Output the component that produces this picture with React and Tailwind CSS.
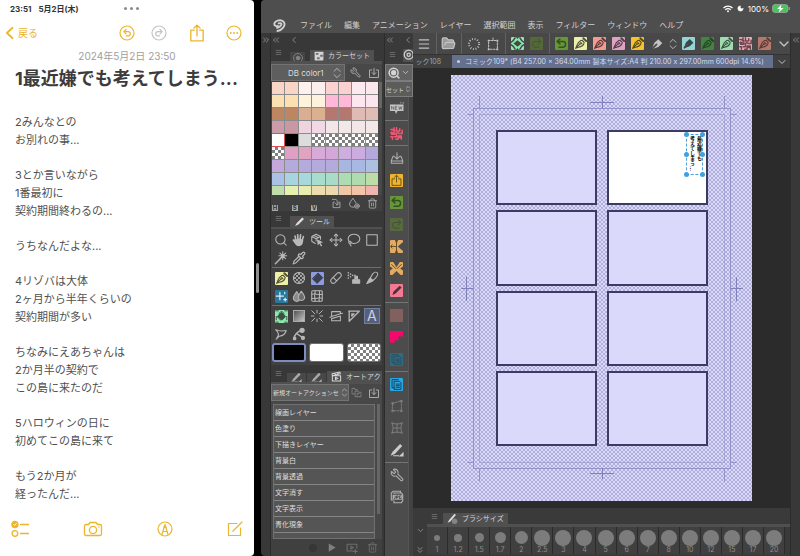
import React from "react";
import {
  Search, Move, Lasso, Wrench, Trash2, Pipette, FolderOpen,
  ChevronDown, ChevronLeft, ChevronsLeft, ChevronsRight, ChevronsDown, ChevronsUpDown, Menu, Moon,
} from "lucide-react";

const CHECKER = "bg-[repeating-conic-gradient(#808080_0_25%,#ffffff_0_50%)] bg-[length:6px_6px]";

function Svg({ size = "size-[14px]", children, width = 1.2 }) {
  return (
    <svg viewBox="0 0 16 16" className={`${size} shrink-0`} fill="none" stroke="currentColor" strokeWidth={width} strokeLinecap="round" strokeLinejoin="round" aria-hidden="true">
      {children}
    </svg>
  );
}

/* ---------- glyphs, 16 x 16 grid ---------- */

const G = {
  nib: (
    <>
      <path d="M2 14 C4 11 3.5 6.5 8 4.5 L10 4 L12.5 6.5 L12 8.5 C10 13 5 12 2 14Z M2.5 13.5 L7.5 8.5" strokeWidth="1.4" />
      <circle cx="8.4" cy="7.8" r="1.1" />
      <path d="M11.5 1.5 L15 5" strokeWidth="2.4" />
    </>
  ),
  marker: (
    <>
      <path d="M2 14 L5 6.5 L9.5 2.5 L14 7 L9.5 11.5Z" fill="currentColor" stroke="none" />
      <path d="M3 13 L7.5 8.5" stroke="#4a4a4a" strokeWidth="2" />
    </>
  ),
  bucket: (
    <>
      <path d="M3 8 L8 3 L13 8 L9 12 H7Z" fill="currentColor" />
      <path d="M1 1 H4 M12 1 H15 M1 15 H4 M12 15 H15 M1.5 8 V12 M14.5 8 V12 M5 5 C5 1 11 1 11 5" />
    </>
  ),
  rotateView: (
    <>
      <path d="M8 4 L13 8 L8 12 L3 8Z" fill="#484848" stroke="none" />
      <path d="M0 6.5 C2 5.5 4 3 5 1 M16 6.5 C14 5.5 12 3 11 1 M0 9.5 C2 10.5 4 13 5 15 M16 9.5 C14 10.5 12 13 11 15" strokeWidth="1.8" stroke="#484848" />
      <path d="M6 0 H10 L8 2.5Z M6 16 H10 L8 13.5Z" fill="#484848" stroke="none" />
    </>
  ),
  undoTile: <path d="M6 2.5 L2.5 5.5 L6 8.5 M3 5.5 H10 C14 5.5 14 12.5 10 12.5 H5" strokeWidth="1.8" />,
  redoTile: <path d="M10 2.5 L13.5 5.5 L10 8.5 M13 5.5 H6 C2 5.5 2 12.5 6 12.5 H11" />,
  maze: <path d="M1 3 H5 V1 M8 1 V5 H12 V2 M15 4 V8 H11 M2 6 V9 H6 V6 M8 8 V12 H5 M1 12 H3 V15 M7 15 H10 V11 H14 V15 M4 4.5 H6 M13 13 H11 M9 7 H10 M1 7 H4" strokeWidth="1.8" />,
  share: <path d="M5.5 6 H2.5 V14 H13.5 V6 H10.5 M8 10 V2 M5.5 4 L8 1.5 L10.5 4" />,
  tray: <path d="M5 6 H3.5 L1.5 11 V14 H14.5 V11 L12.5 6 H11 M1.5 11.5 H14.5 M8 2 V9 M5.5 6.8 L8 9.2 L10.5 6.8" />,
  flipH: (
    <>
      <path d="M9.5 8 L16 2.5 V13.5Z M6 0 H10 L8 5Z M6 16 H10 L8 11Z" fill="#4c4c4c" stroke="none" />
      <path d="M1 8 H7 M2.5 6 L1 8 L2.5 10 M8 1 V15" stroke="#6a4a20" />
    </>
  ),
  flipV: (
    <>
      <path d="M4 0 H12 L8 6.5Z M3 16 L8 11 L13 16Z M0 5.5 L3.5 8 L0 10.5Z M16 5.5 L12.5 8 L16 10.5Z" fill="#4c4c4c" stroke="none" />
      <path d="M2 3 L7 8 M14 3 L9 8" stroke="#6a4a20" />
    </>
  ),
  slash: <path d="M3 13.5 L4.2 9.5 L12 2 L14.3 4.3 L6.5 12Z" fill="currentColor" stroke="none" />,
  blob: <path d="M0 0 H16 V7 L11 6 L10 12 L6 11 L5 15 L0 14Z" fill="#f4086c" stroke="none" />,
  sheet: (
    <>
      <path d="M5.5 4 H11.5 L13.5 6 V14 H5.5Z" />
      <path d="M5 12 H2.5 V2 H10 M7.5 7.5 H11.5 M7.5 9.5 H11.5 M7.5 11.5 H11.5" />
    </>
  ),
  distort: (
    <>
      <path d="M3 5 L13 2 V13.5 H2.5Z" strokeDasharray="2 1.5" />
      <circle cx="3" cy="5" r="1" /><circle cx="13" cy="2.5" r="1" /><circle cx="13" cy="13.5" r="1" /><circle cx="3" cy="13.5" r="1" />
    </>
  ),
  mesh: <path d="M2 2 C4 6 4 10 2 14 M14 2 C12 6 12 10 14 14 M2 2 C6 4 10 4 14 2 M2 14 C6 12 10 12 14 14 M8 3 V13 M3.5 8 H12.5" />,
  bigPencil: (
    <>
      <path d="M0.5 14.5 L3 10 L11.5 1 L14 3.5 L5.5 12.5Z" fill="currentColor" stroke="none" />
      <path d="M4 14.5 H10" />
      <path d="M15.5 10 V15.5 H10Z" fill="currentColor" stroke="none" />
    </>
  ),
  hand: (
    <path d="M4.5 8.5 L3.5 3.5 M6.8 7.5 L6.5 2 M9.2 7.5 L9.8 2 M11.5 8.5 L13 4 M4.5 8.5 L1.5 8 L5 13 C6 14.5 10 14.5 11 12.5 L12 8.5 L9 7.5 H7Z" fill="currentColor" strokeWidth="1.9" />
  ),
  cube: (
    <>
      <path d="M7 1.5 L12 4 V7 M7 1.5 L2 4 V9.5 L6 12 M2 4 L7 6.5 L12 4 M7 6.5 V9 M4.5 2.8 L9.5 5.3" />
      <path d="M8 7 L15 10.5 L12 11.3 L14 14.5 L12.6 15.3 L10.8 12.2 L8.8 14Z" fill="currentColor" stroke="none" />
    </>
  ),
  box: <rect x="2" y="2" width="12" height="12" />,
  wand: (
    <>
      <path d="M8 8 L1.5 14.5" strokeWidth="1.6" />
      <path d="M10 1 V10 M5.5 5.5 H14.5 M6.8 2.3 L13.2 8.7 M13.2 2.3 L6.8 8.7" />
      <circle cx="10" cy="5.5" r="2.2" fill="currentColor" stroke="none" />
    </>
  ),
  halftone: (
    <>
      <circle cx="8" cy="8" r="6.3" strokeDasharray="2.5 1" />
      <path d="M3.5 3.5 L12.5 12.5 M12.5 3.5 L3.5 12.5 M6.5 2 L14 9.5 M2 6.5 L9.5 14 M9.5 2 L2 9.5 M14 6.5 L6.5 14" strokeWidth="1" />
    </>
  ),
  eraser: <path d="M9 1.5 L14.5 7 L7.5 14 L2 8.5Z" fill="currentColor" />,
  plaster: <path d="M2.5 9.5 L9.5 2.5 C12 0.5 15.5 4 13.5 6.5 L6.5 13.5 C4 15.5 0.5 12 2.5 9.5Z M5 7.5 L8.5 11" />,
  spray: (
    <>
      <path d="M6.5 10 H14.5 V14 H6.5Z M9 9 V6 H12 V9" fill="currentColor" />
      <path d="M1.5 2 V2.1 M1.5 5 V5.1 M1.5 8 V8.1 M4 3.5 V3.6 M4 6.5 V6.6 M6.5 5 V5.1 M9 5 V5.1" strokeWidth="1.8" />
    </>
  ),
  brush: (
    <>
      <path d="M9 3 C11 1 13 1 14 2 C15 4 14 6 12.5 7.5 L9 11 L6 8Z" />
      <path d="M6 8 L9 11 C7 13 5 12.5 2 14.5 C3.5 12 4 9.5 6 8Z" fill="currentColor" />
    </>
  ),
  sparkle: <path d="M6 3 V12 M1.5 7.5 H10.5 M12.5 10 V13.5 M10.8 11.8 H14.2 M12 3 V4.5" stroke="#d8eef8" strokeWidth="1.5" />,
  blend: (
    <>
      <path d="M5.5 3 C3 6 1.5 8.5 1.5 10.5 A4 4 0 0 0 9 12 C9.5 9 7 5.5 5.5 3Z" fill="#8a8a8a" />
      <path d="M10.5 2.5 C8 6 7 8 7 10.5 A4 4 0 0 0 14.5 10.5 C14.5 8 12.5 5 10.5 2.5Z" fill="#6c6c6c" />
    </>
  ),
  grid: (
    <>
      <rect x="2" y="2" width="12" height="12" rx="1" />
      <path d="M6 2 C5 6 5 10 6 14 M10.5 2 C12 6 10 10 10.5 14 M2 6 C6 5 10 7 14 6 M2 10.5 C6 11.5 10 9.5 14 10.5" />
    </>
  ),
  burst: <path d="M8 1.5 V4.5 M8 11.5 V14.5 M1.5 8 H4.5 M11.5 8 H14.5 M2 2 L5.5 5.5 M14 2 L10.5 5.5 M2 14 L5.5 10.5 M14 14 L10.5 10.5" strokeWidth="1.1" />,
  frame: <path d="M3 3 H13 V5.5 L3 8.5Z M3 11 L13 8 V13.5 H3Z M1 9.5 L3 8.8 M13 5.5 L15.5 4.8" />,
  ruler: <path d="M2 2.5 H14 L2.5 14 V2.5 M5.5 5.5 H8 L5.5 8Z" />,
  balloon: <path d="M2 3 C6 5 9 5 14 4 C13 8 10 10 6 10.5 L2.5 14 L5 9.5 C5.5 7 4 5 2 3Z" />,
  node: (
    <>
      <path d="M2 14 C3 8 7 5 11 4 M6 8 L12 12" strokeWidth="1.5" />
      <circle cx="11.5" cy="3.8" r="2.4" fill="currentColor" /><circle cx="3" cy="13" r="1.5" fill="currentColor" /><circle cx="12.5" cy="12.5" r="1.8" fill="currentColor" />
    </>
  ),
  download: <path d="M5 4 H2 V14 H14 V4 H11 M8 2 V10 M5.5 7.5 L8 10 L10.5 7.5" />,
  stamp: <path d="M5 6 H3 V14 H13 V6 H11 M2 2 H6 C8 2 9 3 9 5 V10 M6.5 8 L9 10.5 L11.5 8" />,
  dropPlus: (
    <>
      <path d="M6.5 2 C4 5 2 7.5 2 10 A4.5 4.5 0 0 0 9 13 M6.5 2 C8 4 9.5 5.5 10.5 7.5" />
      <circle cx="12" cy="12" r="3" /><path d="M12 10.8 V13.2 M10.8 12 H13.2" />
    </>
  ),
  swatches: (
    <>
      <rect x="1" y="1" width="14" height="14" rx="1" fill="#d4d4d4" stroke="none" />
      <path d="M3 3 H7 V6 H3Z M10 6 H14 V9 H10Z M5 10 H9 V13 H5Z" fill="#6c6c6c" stroke="none" />
    </>
  ),
  clapper: <path d="M2 7 H14 V14.5 H2Z M2 7 L1.5 4 L13 1.5 L13.5 4 L2 7 M5 3.5 L7 5.5 M9 2.5 L11 4.5 M6.5 9 V12.5 L10 10.7Z" strokeWidth="1.5" />,
  folders: <path d="M1.5 2 H5 L6 3.5 H9 V6 M1.5 2 V10 H6 M6 6 H10 L11 7.5 H14.5 V14 H6Z M9 12 V9.5 H12" strokeWidth="1.5" />,
  setPlus: <path d="M9 12 H1.5 V3 H14.5 V8 M6.5 5.5 V9.5 L10 7.5Z M12.5 10 V15 M10 12.5 H15" strokeWidth="1.5" />,
  dottedCircle: <circle cx="8" cy="8" r="5.8" strokeDasharray="1 2.04" strokeWidth="2.4" strokeLinecap="butt" />,
  crop: (
    <>
      <rect x="3" y="4" width="10" height="10" strokeDasharray="1.8 1.5" />
      <path d="M2 3 H4 V5 H2Z M12 3 H14 V5 H12Z M2 13 H4 V15 H2Z M12 13 H14 V15 H12Z M7.5 0.5 H8.5 V4 H7.5Z" fill="currentColor" stroke="none" />
    </>
  ),
};

const TILE = "flex size-[13px] items-center justify-center overflow-hidden rounded-[1px]";

function Tile({ cls, glyph }) {
  return (
    <span className={`${TILE} ${cls}`}>
      <Svg size="size-[13px]">{G[glyph]}</Svg>
    </span>
  );
}

/* ---------- notes ---------- */

const NOTES = [
  ["2みんなとの", "お別れの事..."],
  ["3とか言いながら", "1番最初に", "契約期間終わるの..."],
  ["うちなんだよな..."],
  ["4リゾバは大体", "2ヶ月から半年くらいの", "契約期間が多い"],
  ["ちなみにえあちゃんは", "2か月半の契約で", "この島に来たのだ"],
  ["5ハロウィンの日に", "初めてこの島に来て"],
  ["もう2か月が", "経ったんだ..."],
];

function NotesApp() {
  return (
    <section className="flex w-[31.75%] shrink-0 flex-col overflow-hidden rounded-r-[4px] bg-white text-[#505050]">
      <div className="grid h-[17px] grid-cols-3 items-center pl-[10px] text-[8px] font-bold text-[#333]">
        <span className="flex gap-[7px] whitespace-nowrap"><span>23:51</span><span>5月2日(木)</span></span>
        <button aria-label="マルチタスク" className="mx-auto flex gap-[3px]">
          <i className="size-[3px] rounded-full bg-[#8a8a8a]" /><i className="size-[3px] rounded-full bg-[#8a8a8a]" /><i className="size-[3px] rounded-full bg-[#8a8a8a]" />
        </button>
      </div>
      <div className="flex h-8 items-center pr-[12px] pl-[5px] text-[#ecb52c]">
        <button className="flex items-center gap-[4px] text-[10px] leading-[14px]">
          <svg viewBox="0 0 10 16" className="h-[14px] w-[9px]" fill="none" stroke="currentColor" strokeWidth="2" strokeLinecap="round" strokeLinejoin="round" aria-hidden="true"><path d="M8.5 2 L2 8 L8.5 14" /></svg>
          戻る
        </button>
        <div className="ml-auto flex items-center gap-[16px]">
          <button aria-label="取り消す"><Svg size="size-[16px]"><circle cx="8" cy="8" r="7" /><path d="M7 4.5 L4.8 6.7 L7 8.9 M5 6.7 H9.2 C12 6.7 12 10.9 9.2 10.9 H7.5" /></Svg></button>
          <button aria-label="やり直す" className="text-[#c4c4c4]"><Svg size="size-[16px]"><circle cx="8" cy="8" r="7" /><path d="M9 4.5 L11.2 6.7 L9 8.9 M11 6.7 H6.8 C4 6.7 4 10.9 6.8 10.9 H8.5" /></Svg></button>
          <button aria-label="共有" className="ml-[5px]"><Svg size="size-[18px]"><path d="M5.5 5.5 H2.5 V15 H13.5 V5.5 H10.5 M8 10.5 V1 M5.3 3.5 L8 1 L10.7 3.5" /></Svg></button>
          <button aria-label="その他" className="ml-[4px]"><Svg size="size-[16px]"><circle cx="8" cy="8" r="7" /><path d="M4.8 8 V8.01 M8 8 V8.01 M11.2 8 V8.01" strokeWidth="1.9" /></Svg></button>
        </div>
      </div>
      <div className="h-[14px] text-center text-[10px] leading-[14px] text-[#a0a0a0]">2024年5月2日 23:50</div>
      <h1 className="mt-[3px] px-[15px] text-[18px] leading-[26px] font-bold whitespace-nowrap text-[#3c3c3c]">1最近嫌でも考えてしまう...</h1>
      <div className="mt-[21px] flex min-h-0 flex-1 flex-col gap-[17px] overflow-hidden px-[15px] text-[11px] leading-[18px]">
        {NOTES.map((lines) => (
          <p key={lines[0]}>{lines.map((l) => <span key={l} className="block">{l}</span>)}</p>
        ))}
      </div>
      <div className="flex items-center justify-between px-[11px] pt-1 pb-[18px] text-[#ecb52c]">
        <button aria-label="チェックリスト"><Svg size="size-[18px]"><circle cx="3.5" cy="4" r="2.7" fill="currentColor" /><path d="M2.4 4 L3.2 4.9 L4.8 3" stroke="#fff" strokeWidth="0.8" /><circle cx="3.5" cy="12" r="2.5" /><path d="M8.5 4 H15.5 M8.5 12 H15.5" /></Svg></button>
        <button aria-label="カメラ"><svg viewBox="0 0 20 16" className="h-[16px] w-[20px]" fill="none" stroke="currentColor" strokeWidth="1.3" strokeLinejoin="round" aria-hidden="true"><path d="M3 3.5 H5.5 L7 1.5 H13 L14.5 3.5 H17 Q18.5 3.5 18.5 5 V13 Q18.5 14.5 17 14.5 H3 Q1.5 14.5 1.5 13 V5 Q1.5 3.5 3 3.5Z" /><circle cx="10" cy="9" r="3.6" /><path d="M15.5 6 H16.5" /></svg></button>
        <button aria-label="マークアップ"><Svg size="size-[16px]"><circle cx="8" cy="8" r="7" /><path d="M5 13.5 L7.2 6 H8.8 L11 13.5 M6 10.5 H10" /><path d="M7.1 6.5 L8 3.5 L8.9 6.5Z" fill="currentColor" /></Svg></button>
        <button aria-label="新規メモ"><Svg size="size-[16px]"><path d="M10 2.5 H1.5 V14.5 H13.5 V7 M6.5 9.5 L15 1 M6.2 9.9 L5.8 10.3" /></Svg></button>
      </div>
    </section>
  );
}

/* ---------- paint app ---------- */

const MENUS = ["ファイル", "編集", "アニメーション", "レイヤー", "選択範囲", "表示", "フィルター", "ウィンドウ", "ヘルプ"];

function TopBar() {
  return (
    <header className="bg-[#4e4e4e] text-[#d0d0d0]">
      <div className="flex h-[17px] items-center justify-end gap-[3px] pr-[10px] text-[8px] text-white">
        <svg viewBox="0 0 20 16" className="h-[8px] w-[10px]" fill="none" stroke="currentColor" strokeWidth="2.6" aria-hidden="true"><path d="M1 6 C6 1 14 1 19 6 M4.5 9.5 C8 6.5 12 6.5 15.5 9.5" /><path d="M7.5 12 C9 10.8 11 10.8 12.5 12 L10 15Z" fill="currentColor" stroke="none" /></svg>
        <Moon className="mx-[1px] size-[7px] fill-current" />
        <span>100%</span>
        <svg viewBox="0 0 36 18" className="h-[9px] w-[18px]" aria-hidden="true"><rect x="1" y="1" width="31" height="16" rx="5" fill="#43c759" stroke="#a6a6a6" strokeWidth="1.5" /><path d="M34.5 6 V12" stroke="#a6a6a6" strokeWidth="2" /><path d="M19 1 L10 10 H15.5 L13.5 17 L23 8 H17.5Z" fill="#fff" /></svg>
      </div>
      <nav className="flex h-4 items-center gap-[12px] pl-[12px] text-[8px] whitespace-nowrap">
        <svg viewBox="0 0 16 16" className="mr-[2px] size-[13px]" fill="none" stroke="currentColor" strokeWidth="2.3" strokeLinecap="round" strokeLinejoin="round" aria-hidden="true"><path d="M6 8.5 C3 9.5 1 7.5 1.8 5 C3 2 8 1 11 2 C15 3.5 15 7.5 12.5 10.5 C10.5 13 7.5 14.5 5.5 14.8 M7 5.5 C9.5 4.5 11 5.5 10 7.5 C9 9.5 6.5 10.5 5 11" /></svg>
        {MENUS.map((m) => <button key={m}>{m}</button>)}
      </nav>
    </header>
  );
}

const PALETTE = [
  "bg-[#f9d5c5]", "bg-[#f9d5c5]", "bg-[#fdf0ee]", "bg-[#fdeeee]", "bg-[#fcd2d0]", "bg-[#fbd0cf]", "bg-[#fdeaf0]", "bg-[#fce8ec]",
  "bg-[#fbe0b0]", "bg-[#fbe0b2]", "bg-[#fdf2dc]", "bg-[#fdf2de]", "bg-[#ffb8d8]", "bg-[#ffb8d8]", "bg-[#fde6f0]", "bg-[#fce6ee]",
  "bg-[#bd8660]", "bg-[#bd8660]", "bg-[#d9ae92]", "bg-[#dbb090]", "bg-[#b57870]", "bg-[#b57870]", "bg-[#e0bab4]", "bg-[#e0bcb4]",
  "bg-[#cb9ba8]", "bg-[#c998a4]", "bg-[#efd4e0]", "bg-[#f2d8e4]", "bg-[#f2e6e8]", "bg-[#f2e8e8]", "bg-[#f2e6e8]", "bg-[#f2e8e6]",
  "bg-white", "bg-black", "bg-[#dcdcdc]", CHECKER, CHECKER, CHECKER, CHECKER, CHECKER,
  CHECKER, "bg-[#dea0c4]", "bg-[#e0a4c0]", "bg-[#d8aada]", "bg-[#d4a6da]", "bg-[#cdaede]", "bg-[#ccace0]", "bg-[#b4a8dc]",
  "bg-[#c4a8dc]", "bg-[#b4aadc]", "bg-[#b4aadc]", "bg-[#b4aadc]", "bg-[#b4aadc]", "bg-[#aab6e2]", "bg-[#a8b8e2]", "bg-[#acc0e2]",
  "bg-[#aac0e4]", "bg-[#a8d4e0]", "bg-[#a8d8dc]", "bg-[#a8dccc]", "bg-[#a8dcc8]", "bg-[#acdcb4]", "bg-[#aedcb0]", "bg-[#bcdca8]",
  "bg-[#c0dcaa]", "bg-[#e6f0ae]", "bg-[#e8ecae]", "bg-[#ecdcae]", "bg-[#eed8b0]", "bg-[#f0c8a8]", "bg-[#f2c4a8]", "bg-[#f0b4b0]",
];

function PanelTabs({ children }) {
  return (
    <div className="flex h-[14px] items-end pl-[1px]">
      <Menu className="mr-[8px] mb-[5px] ml-[3px] size-[7px] shrink-0 text-[#8a8a8a]" />
      {children}
    </div>
  );
}

const TAB = "flex h-[11px] items-center gap-[4px] bg-[#505050] px-[4px] text-[7px] leading-[11px] whitespace-nowrap text-[#d6d6d6]";

function PanelSelect({ label, value, wide }) {
  return (
    <div className={`relative flex h-[17px] items-center border border-[#737373] bg-[#5e5e5e] ${wide ? "w-[78px]" : "w-[74px]"}`}>
      <select aria-label={label} className={`h-full w-full appearance-none text-[#dcdcdc] outline-none ${wide ? "pl-[1px] text-[6px]" : "pl-[16px] text-[8px]"}`}>
        <option>{value}</option>
      </select>
      <ChevronsUpDown className={`pointer-events-none absolute text-[#c0c0c0] ${wide ? "-right-[2px] size-[11px]" : "right-0 size-[14px]"}`} strokeWidth={1.5} />
    </div>
  );
}

function ColorPanel() {
  return (
    <>
      <PanelTabs>
        <button aria-label="カラーサークル" className="flex h-[9px] w-[15px] items-start justify-center overflow-hidden bg-[#454545] text-[#858585]"><Svg size="size-[12px]"><circle cx="8" cy="8" r="6" /><circle cx="8" cy="8" r="2.5" fill="currentColor" /></Svg></button>
        <button className={`ml-[5px] ${TAB}`}><Svg size="size-[10px]">{G.swatches}</Svg>カラーセット</button>
      </PanelTabs>
      <div className="border-t-[3px] border-[#505050] bg-[#484848]">
        <div className="flex h-[17px] items-center text-[#b4b4b4]">
          <PanelSelect label="カラーセット" value="DB color1" />
          <button aria-label="設定" className="ml-[5px]"><Wrench className="size-[11px] -scale-x-100" /></button>
          <button aria-label="追加" className="ml-[7px]"><Svg size="size-[12px]">{G.download}</Svg></button>
        </div>
        <div className="flex h-[114px] gap-[1px] bg-[#484848] pt-[1px] pl-[1px]">
          <div className="grid flex-1 auto-rows-[12px] grid-cols-8 gap-px overflow-hidden bg-[#8c8c8c]">
            {PALETTE.map((c, i) => (
              <button key={i} aria-label={`色 ${i + 1}`} className={`${c} ${i === 32 ? "outline outline-[#dc5050]" : ""}`} />
            ))}
          </div>
          <div className="h-[26px] w-[3px] bg-[#666]" />
        </div>
        <div className="flex h-[16px] items-center justify-between bg-[#404040] pr-[4px] pl-[1px] text-[#b0b0b0]">
          {["H", "S", "V"].map((k) => (
            <button key={k} className="mr-[13px] h-[6px] w-[6px] self-end bg-[#a8a8a8] text-center text-[6px] leading-[6px] font-bold text-[#333]">{k}</button>
          ))}
          <button aria-label="色の置き換え"><Svg size="size-[11px]">{G.stamp}</Svg></button>
          <button aria-label="色の追加" className="mx-[6px]"><Svg size="size-[12px]">{G.dropPlus}</Svg></button>
          <button aria-label="色の削除"><Trash2 className="size-[11px]" strokeWidth={1.8} /></button>
        </div>
      </div>
    </>
  );
}

const L = "size-[14px]";
const TOOL_GROUPS = [
  [
    ["虫眼鏡", <Search className={L} strokeWidth={1.8} />], ["手のひら", <Svg>{G.hand}</Svg>],
    ["操作", <Svg>{G.cube}</Svg>], ["移動", <Move className={L} strokeWidth={1.8} />],
    ["投げなわ", <Lasso className={L} strokeWidth={1.8} />], ["選択範囲", <Svg>{G.box}</Svg>],
    ["自動選択", <Svg>{G.wand}</Svg>], ["スポイト", <Pipette className={L} strokeWidth={2} />],
  ],
  [
    ["ペン", <Tile cls="bg-[#eef0a4] text-[#555538]" glyph="nib" />], ["トーン", <Svg>{G.halftone}</Svg>],
    ["消しゴム", <Tile cls="bg-[#8d9be0] text-[#3c4050]" glyph="eraser" />], ["修正", <Svg>{G.plaster}</Svg>],
    ["エアブラシ", <Svg>{G.spray}</Svg>], ["筆", <Svg>{G.brush}</Svg>],
    ["デコレーション", <Tile cls="bg-[#2b789c]" glyph="sparkle" />], ["色混ぜ", <Svg>{G.blend}</Svg>], ["ゆがみ", <Svg>{G.grid}</Svg>],
  ],
  [
    ["塗りつぶし", <Tile cls="bg-[#8ce8ae] text-[#3c5044]" glyph="bucket" />],
    ["グラデーション", <span className="size-[12px] border border-[#aaa] bg-gradient-to-br from-[#555] to-[#c4c4c4]" />],
    ["集中線", <Svg>{G.burst}</Svg>], ["コマ枠", <Svg>{G.frame}</Svg>], ["定規", <Svg width={1.5}>{G.ruler}</Svg>],
    ["テキスト", <span className="flex size-[16px] items-center justify-center border border-[#7280a8] bg-[#56607e] text-[14px] leading-none text-[#ccd0dc]">A</span>],
    ["フキダシ", <Svg>{G.balloon}</Svg>], ["線修正", <Svg>{G.node}</Svg>],
  ],
];

function ToolPanel() {
  return (
    <div className="mt-[2px]">
      <PanelTabs>
        <button className={TAB}><Svg size="size-[11px]"><path d="M1.5 14.5 L4 10 L12 2 L14.5 4.5 L6.5 12.5Z" fill="#ddd" stroke="none" /></Svg>ツール</button>
      </PanelTabs>
      <div className="border-t-2 border-[#505050] bg-[#404040] px-[1px] pt-[2px] pb-[3px] text-[#b8b8b8]">
        {TOOL_GROUPS.map((group, g) => (
          <div key={g} className={`grid auto-rows-[18px] grid-cols-6 ${g < 2 ? "mb-[1px] border-b border-[#6e6e6e]" : ""}`}>
            {group.map(([name, icon]) => <button key={name} aria-label={name} className="flex items-center justify-center">{icon}</button>)}
          </div>
        ))}
        <div className="grid h-[19px] grid-cols-3 gap-[3px]">
          <button aria-label="メインカラー" className="rounded-[3px] border-2 border-[#7f8cc0] bg-black" />
          <button aria-label="サブカラー" className="rounded-[3px] border border-[#6e6e6e] bg-white" />
          <button aria-label="透明色" className={`rounded-[3px] border border-[#6e6e6e] ${CHECKER}`} />
        </div>
      </div>
    </div>
  );
}

const ACTIONS = ["線画レイヤー", "色塗り", "下描きレイヤー", "背景白", "背景透過", "文字消す", "文字表示", "青化現象"];

function ActionPanel() {
  return (
    <div className="mt-[3px] flex min-h-0 flex-1 flex-col">
      <div className="flex h-[14px] items-end pl-[1px]">
        <Menu className="mr-[5px] mb-[5px] ml-[3px] size-[7px] shrink-0 text-[#8a8a8a]" />
        <button aria-label="レイヤー" className="flex h-[9px] w-[19px] shrink-0 items-center justify-center overflow-hidden bg-[#484848] text-[#aaa]"><Svg size="size-[11px]">{G.bigPencil}</Svg></button>
        <button aria-label="素材" className="ml-[1px] flex h-[9px] w-[19px] shrink-0 items-center justify-center overflow-hidden bg-[#484848] text-[#aaa]"><Svg size="size-[11px]">{G.bigPencil}</Svg></button>
        <button className="ml-[1px] flex h-[11px] flex-1 items-center gap-[4px] bg-[#505050] pl-[4px] text-[7px] leading-[11px] whitespace-nowrap text-[#d6d6d6]"><Svg size="size-[11px]">{G.clapper}</Svg>オートアク</button>
      </div>
      <div className="flex min-h-0 flex-1 flex-col border-t-2 border-[#505050] bg-[#484848]">
        <div className="flex h-[17px] shrink-0 items-center">
          <PanelSelect label="オートアクションセット" value="新規オートアクションセ" wide />
          <button aria-label="セットを開く" className="ml-[2px] text-[#747474]"><Svg size="size-[11px]">{G.folders}</Svg></button>
          <button aria-label="セットを追加" className="ml-[6px] text-[#b4b4b4]"><Svg size="size-[12px]">{G.download}</Svg></button>
        </div>
        <div className="mt-[3px] flex min-h-0 flex-1 gap-[2px] overflow-hidden px-[2px]">
          <ul className="flex-1 border border-[#707070] bg-[#555]">
            {ACTIONS.map((a) => (
              <li key={a} className="border-b border-[#858585]"><button className="block h-[15px] w-full pl-[1px] text-left text-[7px] leading-[15px] text-[#dedede]">{a}</button></li>
            ))}
          </ul>
          <div className="h-[110px] w-[3px] bg-[#666]" />
        </div>
        <div className="flex h-[17px] shrink-0 items-center justify-end gap-[9px] bg-[#404040] pr-[4px] text-[#6c6c6c]">
          <button aria-label="記録" className="size-[8px] rounded-full bg-[#363636]" />
          <button aria-label="再生"><Svg size="size-[11px]"><path d="M4 2 L14 8 L4 14Z" fill="#808080" stroke="none" /></Svg></button>
          <button aria-label="アクションを追加"><Svg size="size-[12px]">{G.setPlus}</Svg></button>
          <button aria-label="アクションを削除"><Trash2 className="size-[11px]" /></button>
        </div>
      </div>
    </div>
  );
}

const QUICK = [
  ["新規", (
    <svg viewBox="0 0 32 28" className="h-[14px] w-[16px]" aria-hidden="true">
      <path d="M2 7 H29 V20 H17 L14 26 L12 20 H2Z M23 1 L25 4 L23 5Z M28 2 L30 4 L27 6Z" fill="#c4c4c4" />
      <path d="M5 17 V10.5 L9.5 17 V10.5 M16.5 10.5 H12.5 V17 H16.5 M12.5 13.5 H16 M19.5 10.5 L21 17 L22.7 11.5 L24.5 17 L26 10.5" fill="none" stroke="#555" strokeWidth="1.3" />
    </svg>
  ), true],
  ["パターン", <Tile cls="bg-[#5c4548] text-[#ee5a76]" glyph="maze" />, true],
  ["保存", <Svg size="size-[14px]">{G.tray}</Svg>],
  ["書き出し", <Tile cls="bg-[#efb42c] text-[#6a5420]" glyph="share" />],
  ["取り消し", <Tile cls="bg-[#67963a] text-[#34501c]" glyph="undoTile" />],
  ["やり直し", <Tile cls="bg-[#56693f] text-[#42522f]" glyph="redoTile" />],
  ["左右反転", <Tile cls="bg-[#e2ab62]" glyph="flipH" />],
  ["上下反転", <Tile cls="bg-[#e2ab62]" glyph="flipV" />],
  ["消去", <Tile cls="bg-[#f37a92] text-[#4a3038]" glyph="slash" />, true],
  ["塗り", <span className="size-[13px] bg-[#82605e]" />],
  ["トーン削り", <Tile cls="" glyph="blob" />],
  ["変形", <Tile cls="bg-[#326a80] text-[#27505f]" glyph="sheet" />, true],
  ["複製", <Tile cls="bg-[#2ba6e2] text-[#14425c]" glyph="sheet" />],
  ["自由変形", <span className="text-[#7c7c7c]"><Svg>{G.distort}</Svg></span>],
  ["メッシュ変形", <span className="text-[#7c7c7c]"><Svg>{G.mesh}</Svg></span>],
  ["描画", <span className="text-[#cccccc]"><Svg>{G.bigPencil}</Svg></span>, true],
  ["設定", <Wrench className="size-[14px] -scale-x-100" strokeWidth={1.8} />],
  ["画像書き出し", (
    <svg viewBox="0 0 32 32" className="size-[14px]" fill="none" stroke="currentColor" strokeWidth="2.5" aria-hidden="true">
      <path d="M24 7 V3 H7 L3 7 V23 H7 M9 9 V7 H26 L29 10 V25 L26 29 H9 V24" />
      <rect x="6" y="11" width="23" height="11" fill="currentColor" stroke="none" />
      <path d="M12 13 V19 H9 M15 20 V13.5 H18.5 V17 H15 M26 13.5 H21.5 V19.5 H25.5 V17" stroke="#333" strokeWidth="1.6" />
    </svg>
  )],
];

function QuickColumn() {
  return (
    <aside className="flex w-[29px] shrink-0 flex-col border-l border-[#2c2c2c] bg-[#3a3a3a]">
      <div className="flex h-[14px] items-center justify-between text-[#989898]"><ChevronsLeft className="size-[10px]" /><ChevronLeft className="size-[10px]" /></div>
      <div className="flex h-[17px] items-center justify-between overflow-hidden pl-[4px]">
        <Menu className="mb-[3px] size-[7px] text-[#8a8a8a]" />
        <span className="flex w-[10px] overflow-hidden bg-[#505050] text-[#cfcfcf]"><Svg size="size-[13px]" width={1.6}><circle cx="7" cy="7" r="5.5" /><circle cx="7" cy="7" r="2" /></Svg></span>
      </div>
      <button aria-label="サブツール" className="flex h-[17px] items-center border border-[#7c7c7c] bg-[#626262] pl-[2px] text-[#d4d4d4]">
        <Svg size="size-[12px]" width={2}><circle cx="7.5" cy="7.5" r="6" /><circle cx="7.5" cy="7.5" r="2.5" fill="currentColor" /><path d="M12 12 L14.5 14.5" /></Svg>
        <ChevronDown className="ml-[1px] size-[9px]" />
      </button>
      <button className="flex h-[16px] items-center border border-[#7c7c7c] bg-[#5c5c5c] text-[6px] whitespace-nowrap text-[#cfcfcf]">
        <span className="shrink-0">セット</span><ChevronsUpDown className="size-[8px] shrink-0" strokeWidth={2} />
      </button>
      <div className="flex min-h-0 flex-1 overflow-hidden">
        <div className="flex w-[23px] flex-col bg-[#4c4c4c] text-[#b0b0b0]">
          {QUICK.map(([name, icon, line]) => (
            <React.Fragment key={name}>
              <button aria-label={name} className="flex h-[22px] shrink-0 items-center justify-center">{icon}</button>
              {line && <hr className="my-[1px] h-[1px] shrink-0 border-0 bg-[#747474]" />}
            </React.Fragment>
          ))}
        </div>
        <div className="flex-1 border-l border-[#555] bg-[#424242]" />
      </div>
    </aside>
  );
}

const COMMANDS = [
  ["メニュー", <Menu className="size-[14px]" />], "|",
  ["開く", <FolderOpen className="size-[15px] fill-[#9c9c9c]" />], "|",
  ["選択解除", <Svg>{G.dottedCircle}</Svg>], ["切り抜き", <Svg>{G.crop}</Svg>], "|",
  ["反転表示", <Tile cls="bg-[#8ce8ae]" glyph="rotateView" />], ["やり直し", <Tile cls="bg-[#55683c] text-[#445430]" glyph="redoTile" />], "|",
  ["取り消し", <Tile cls="bg-[#67963a] text-[#34501c]" glyph="undoTile" />],
  ["ペン1", <Tile cls="bg-[#ecf0aa] text-[#50523c]" glyph="nib" />],
  ["ペン2", <Tile cls="bg-[#f59a90] text-[#5c3c3a]" glyph="nib" />],
  ["ペン3", <Tile cls="bg-[#dea2c4] text-[#563e4c]" glyph="nib" />],
  ["ペン4", <Tile cls="bg-[#f4c32e] text-[#5a4a1c]" glyph="nib" />],
  ["マーカー", <Svg>{G.marker}</Svg>], "^",
  ["マーカー2", <Tile cls="bg-[#96d4d4] text-[#33474c]" glyph="marker" />],
  ["ペン5", <Tile cls="bg-[#438340] text-[#234824]" glyph="nib" />],
  ["ペン6", <Tile cls="bg-[#a0dcb0] text-[#3c5844]" glyph="nib" />],
  ["パターン", <Tile cls="bg-[#f4a8b4] text-[#6e4850]" glyph="maze" />],
  ["ペン7", <Tile cls="bg-[#b5786c] text-[#5c3c36]" glyph="nib" />],
  ["さらに表示", <ChevronDown className="size-[16px]" />],
];

function ComicPage() {
  return (
    <div className="relative flex-1 bg-[repeating-conic-gradient(#b0afd9_0_25%,#dad9fb_0_50%)] bg-[length:4px_4px] pt-[55px] pr-[44px] pb-[55px] pl-[45px]">
      <svg viewBox="0 0 301 426" preserveAspectRatio="none" className="absolute inset-0 size-full" fill="none" stroke="#9292cc" aria-hidden="true">
        <rect x="22.5" y="33.5" width="257" height="360" />
        <rect x="28.5" y="39.5" width="245" height="348" strokeOpacity="0.6" />
        <path d="M28.5 21 V33 M273.5 21 V33 M28.5 394 V406 M273.5 394 V406 M16 39.5 H22 M280 39.5 H286 M16 387.5 H22 M280 387.5 H286" />
        <path d="M139 27.5 H163 M151.5 21 V34 M139 398.5 H163 M151.5 394 V404 M15.5 202 V226 M10 213.5 H22 M285.5 202 V226 M280 213.5 H292" stroke="#7f80bc" />
      </svg>
      <div className="relative grid h-full grid-cols-2 grid-rows-4 gap-x-[10px] gap-y-[5px]">
        {[0, 1, 2, 3, 4, 5, 6, 7].map((n) => (
          <div key={n} className={`relative border-2 border-[#3c3b62] ${n === 1 ? "bg-white" : "bg-[#dad9fc]"}`}>
            {n === 1 && (
              <div className="absolute top-[2px] right-[3px] h-[41px] w-[17px] border border-dashed border-[#4a9fdc]">
                <p className="h-full w-full pt-[1px] text-[5px] leading-[7px] font-bold whitespace-nowrap text-black [writing-mode:vertical-rl]">最近嫌でも<br />考えてしまう…</p>
                {["-top-[3px] -left-[3px]", "-top-[3px] -right-[3px]", "top-[17px] -left-[3px]", "top-[17px] -right-[3px]", "-bottom-[3px] -left-[3px]", "-bottom-[3px] -right-[3px]"].map((pos) => (
                  <i key={pos} className={`absolute size-[5px] rounded-full bg-[#42a0dc] ${pos}`} />
                ))}
              </div>
            )}
          </div>
        ))}
      </div>
    </div>
  );
}

const BRUSHES = [
  ["1", "size-[6px]"], ["1.2", "size-[8px]"], ["1.5", "size-[9px]"], ["1.7", "size-[11px]"], ["2", "size-[13px]"],
  ...["2.5", "3", "4", "5", "6", "7", "8", "10", "12", "15", "17", "20"].map((n) => [n, "size-[16px]"]),
];

function BrushPanel() {
  return (
    <div className="flex h-[48px] shrink-0 bg-[#3a3a3a]">
      <div className="flex w-[14px] flex-col items-center justify-end gap-[10px] pb-[1px] text-[#989898]"><ChevronDown className="size-[9px]" /><ChevronsDown className="size-[10px]" /></div>
      <div className="flex min-w-0 flex-1 flex-col">
        <div className="flex h-[16px] items-end">
          <Menu className="mr-[5px] mb-[4px] ml-[4px] size-[7px] text-[#8a8a8a]" />
          <button className={TAB}>
            <Svg size="size-[11px]"><path d="M1 14 L3 10 L11 1 L13 3 L5 12Z" fill="#ddd" stroke="none" /><circle cx="11" cy="12" r="4" fill="#858585" stroke="none" /></Svg>
            ブラシサイズ
          </button>
        </div>
        <div className="h-[3px] bg-[#505050]" />
        <div className="flex h-[27px] pr-[5px]">
          {BRUSHES.map(([n, size]) => (
            <button key={n} className="flex min-w-0 flex-1 flex-col items-center border-r border-[#2b2b2b] bg-[#404040] pt-[2px] text-[7px] leading-[8px] text-[#8e8e8e]">
              <span className="flex h-[17px] items-center"><i className={`rounded-full bg-[#7c7c7c] ${size}`} /></span>
              {n}
            </button>
          ))}
        </div>
      </div>
    </div>
  );
}

function Workspace() {
  return (
    <main className="flex min-w-0 flex-1 flex-col bg-[#2b2b2b]">
      <div className="flex h-[22px] shrink-0 items-center overflow-hidden border-b border-[#333] bg-[#484848] pl-[1px] text-[#c4c4c4]">
        {COMMANDS.map((c, i) =>
          c === "|" ? <span key={i} className="flex w-[6px] shrink-0 justify-center self-stretch"><i className="w-px bg-[#626262]" /></span>
          : c === "^" ? <button key={i} aria-label="切り替え" className="w-[13px] shrink-0"><ChevronsUpDown className="size-[14px]" strokeWidth={1.5} /></button>
          : <button key={c[0]} aria-label={c[0]} className="flex w-[19px] shrink-0 items-center justify-center">{c[1]}</button>
        )}
      </div>
      <div className="flex h-[13px] shrink-0 bg-[#404040] text-[7px] leading-[13px] whitespace-nowrap">
        <button className="flex w-[39px] shrink-0 justify-end pr-[11px] text-[#a4a4a4]">ック108</button>
        <button className="flex min-w-0 flex-1 items-center overflow-hidden bg-[#65708f] pl-[5px] text-[#d8dbe6]">
          <i className="mr-[5px] size-[3px] shrink-0 rounded-full bg-[#c8cee0]" />
          コミック109* (B4 257.00 x 364.00mm 製本サイズ:A4 判 210.00 x 297.00mm 600dpi 14.6%)
        </button>
        <button aria-label="タブ一覧" className="flex w-[17px] shrink-0 items-center justify-center text-[#c4c4c4]"><ChevronDown className="size-[12px]" /></button>
      </div>
      <div className="flex min-h-0 flex-1 px-[38px] py-[7px]"><ComicPage /></div>
      <BrushPanel />
    </main>
  );
}

function PaintApp() {
  return (
    <section className="flex min-w-0 flex-1 flex-col overflow-hidden rounded-l-[4px] bg-[#383838]">
      <TopBar />
      <div className="flex min-h-0 flex-1">
        <div className="w-[9px] shrink-0 pt-[2px] text-[#989898]"><ChevronsRight className="size-[10px]" /></div>
        <aside className="flex w-[114px] shrink-0 flex-col border-l border-[#2c2c2c] pr-[2px]">
          <div className="flex h-[14px] shrink-0 items-center gap-[8px] text-[#989898]"><ChevronsLeft className="size-[10px]" /><ChevronLeft className="size-[10px]" /></div>
          <ColorPanel />
          <ToolPanel />
          <ActionPanel />
        </aside>
        <QuickColumn />
        <Workspace />
        <div className="w-[10px] shrink-0 border-l border-[#2c2c2c] pt-[2px] text-[#989898]"><ChevronsLeft className="size-[10px]" /></div>
      </div>
    </section>
  );
}

export default function App() {
  return (
    <div lang="ja" className="flex h-screen w-full overflow-hidden bg-black font-['Inter','Noto_Sans_CJK_JP',sans-serif]">
      <NotesApp />
      <div className="flex w-[7px] shrink-0 items-center justify-center"><i className="h-[30px] w-[3px] rounded-full bg-[#8e8e8e]" /></div>
      <PaintApp />
    </div>
  );
}
